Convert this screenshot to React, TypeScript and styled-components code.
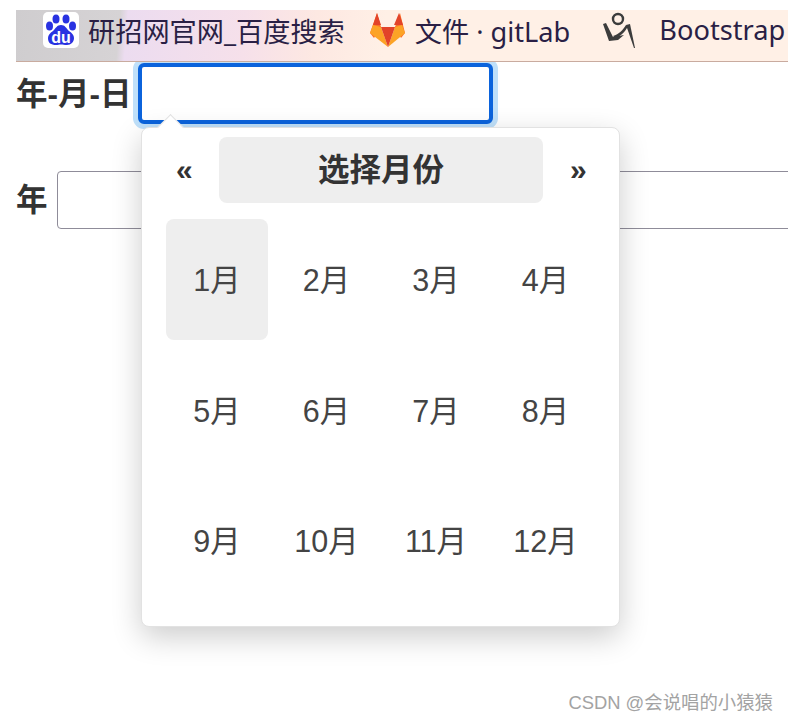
import React from 'react';
import styled, { createGlobalStyle } from 'styled-components';

const months = ['1月', '2月', '3月', '4月', '5月', '6月', '7月', '8月', '9月', '10月', '11月', '12月'];

const GlobalStyle = createGlobalStyle`
  html, body {
    margin: 0;
    background: #fff;
    overflow: hidden;
  }

  body {
    font-family: "Liberation Sans", "Noto Sans CJK SC", sans-serif;
  }
`;

const Page = styled.div`
  position: relative;
  width: 788px;
  height: 721px;
  padding-top: 10px;
  box-sizing: border-box;
  overflow: hidden;
`;

const BookmarkBar = styled.div`
  position: relative;
  z-index: 1;
  display: flex;
  align-items: center;
  height: 52px;
  margin-left: 16px;
  padding: 0 0 12px 27px;
  box-sizing: border-box;
  border-bottom: 1px solid #c9ab9f;
  background: linear-gradient(95deg, #cfcdcf 0, #d6d3d5 104px, #ecdcf0 112px, #f6e0ea 230px, #fde8e2 300px, #fff0e6 370px, #fff0e6 100%);
  color: #2a1f45;
  font-family: "Noto Sans", "Noto Sans CJK SC", sans-serif;
  font-size: 27.2px;
  white-space: nowrap;
`;

const Bookmark = styled.div<{ $gap: number; $end: number }>`
  display: flex;
  align-items: center;
  flex: none;
  gap: ${(p) => p.$gap}px;
  margin-right: ${(p) => p.$end}px;
`;

const Field = styled.div<{ $top: number }>`
  display: flex;
  align-items: center;
  gap: 7px;
  margin: ${(p) => p.$top}px 0 0 16px;
  color: #333;
  font-size: 31.5px;
  font-weight: 700;
`;

const Label = styled.label`
  padding-bottom: 6px;
`;

const Input = styled.div<{ $focused?: boolean }>`
  flex: none;
  box-sizing: border-box;
  background: #fff;
  ${(p) => p.$focused
    ? `
    width: 355px;
    height: 61px;
    border: 4px solid #0b63dc;
    border-radius: 6px;
    box-shadow: 0 0 0 5px #bfe0fa;
  `
    : `
    width: 760px;
    height: 58px;
    margin-left: 2px;
    border: 1px solid #8f8c99;
    border-radius: 4px;
  `}
`;

const Popover = styled.div`
  position: absolute;
  left: 141px;
  top: 127px;
  width: 479px;
  height: 500px;
  padding: 9px 24px 0;
  box-sizing: border-box;
  background: #fff;
  border: 1px solid #e2e2e2;
  border-radius: 8px;
  box-shadow: 0 10px 30px rgba(0, 0, 0, 0.2);

  &::before {
    content: '';
    position: absolute;
    left: 19px;
    top: -10px;
    width: 18px;
    height: 18px;
    background: #fff;
    border-top: 1px solid #e2e2e2;
    border-left: 1px solid #e2e2e2;
    transform: rotate(45deg);
  }
`;

const Header = styled.div`
  display: flex;
  align-items: center;
  height: 66px;
`;

const Arrow = styled.div<{ $right?: boolean }>`
  flex: none;
  box-sizing: border-box;
  width: ${(p) => (p.$right ? '52px' : '53px')};
  padding: ${(p) => (p.$right ? '0 0 0 27px' : '0 0 0 10px')};
  color: #333;
  font-size: 30px;
  font-weight: 700;
  line-height: 60px;
`;

const Title = styled.div`
  flex: 1;
  height: 66px;
  border-radius: 8px;
  background: #eee;
  color: #333;
  font-size: 31.5px;
  font-weight: 700;
  line-height: 67px;
  text-align: center;
`;

const MonthGrid = styled.div`
  display: grid;
  grid-template-columns: repeat(4, 102px);
  grid-auto-rows: 121px;
  column-gap: 7.5px;
  row-gap: 9.5px;
  margin-top: 16px;
`;

const Month = styled.div<{ $active?: boolean }>`
  display: flex;
  align-items: center;
  justify-content: center;
  padding-bottom: 3px;
  border-radius: 8px;
  background: ${(p) => (p.$active ? '#eee' : 'transparent')};
  color: #444;
  font-size: 30.5px;
`;

const Watermark = styled.div`
  position: absolute;
  right: 15px;
  top: 691px;
  color: #a3a3a3;
  font-size: 18.4px;
  line-height: 24px;
`;

function BaiduIcon (): React.ReactElement {
  return (
    <svg height='36' viewBox='0 0 36 36' width='36'>
      <rect fill='#fff' height='36' rx='5' width='36' />
      <g fill='#2932e1'>
        <ellipse cx='6.5' cy='14' rx='3.5' ry='4.5' />
        <ellipse cx='13' cy='7' rx='3.5' ry='4.5' />
        <ellipse cx='23' cy='7' rx='3.5' ry='4.5' />
        <ellipse cx='29.5' cy='14' rx='3.5' ry='4.5' />
        <path d='M18 13c-4 0-5 3-8 6-3 2-5 4-5 7 0 5 3 7 8 7 2 0 3-.6 5-.6s3 .6 6 .6c4 0 7-3 7-7 0-3-2-5-5-7-3-3-4-6-8-6z' />
      </g>
      <text fill='#fff' fontFamily='Liberation Sans, sans-serif' fontSize='16' fontWeight='700' textAnchor='middle' x='18' y='31'>du</text>
    </svg>
  );
}

function GitLabIcon (): React.ReactElement {
  return (
    <svg height='36' viewBox='0 0 36 36' width='36'>
      <path d='M7 1 0 21l4 5 7-11z' fill='#fc6d26' />
      <path d='M30 1l5 20-4 5-6-11z' fill='#fc6d26' />
      <path d='M7 1 3 13h8z' fill='#e24329' />
      <path d='M29 1l4 12h-9z' fill='#e24329' />
      <path d='M18 35 0 21l3-8 8 2z' fill='#fca326' />
      <path d='M18 35l17-14-3-8-7 2z' fill='#fca326' />
      <path d='M18 35 11 15h14z' fill='#e24329' />
    </svg>
  );
}

function BootstrapIcon (): React.ReactElement {
  return (
    <svg height='36' viewBox='0 0 34 36' width='34'>
      <circle cx='16' cy='7' fill='none' r='5' stroke='#3c3c3c' strokeWidth='2.4' />
      <path d='M1 12l3-1 7 14 11-2-6 5-9 1z' fill='#3c3c3c' />
      <path d='M11 24c6-2 10-6 13-11l2 1c-3 6-7 10-13 12z' fill='#3c3c3c' />
      <path d='M24 13l4-1 5 24-1 0z' fill='#3c3c3c' />
    </svg>
  );
}

function App (): React.ReactElement {
  return (
    <Page>
      <GlobalStyle />
      <BookmarkBar>
        <Bookmark $end={25} $gap={9}><BaiduIcon />研招网官网_百度搜索</Bookmark>
        <Bookmark $end={32} $gap={9}><GitLabIcon />文件 · gitLab</Bookmark>
        <Bookmark $end={0} $gap={23}><BootstrapIcon />Bootstrap</Bookmark>
      </BookmarkBar>
      <Field $top={1}>
        <Label>年-月-日</Label>
        <Input $focused />
      </Field>
      <Field $top={47}>
        <Label>年</Label>
        <Input />
      </Field>
      <Popover>
        <Header>
          <Arrow>«</Arrow>
          <Title>选择月份</Title>
          <Arrow $right>»</Arrow>
        </Header>
        <MonthGrid>
          {months.map((month, index) => (
            <Month $active={index === 0} key={month}>{month}</Month>
          ))}
        </MonthGrid>
      </Popover>
      <Watermark>CSDN @会说唱的小猿猿</Watermark>
    </Page>
  );
}

export default App;
